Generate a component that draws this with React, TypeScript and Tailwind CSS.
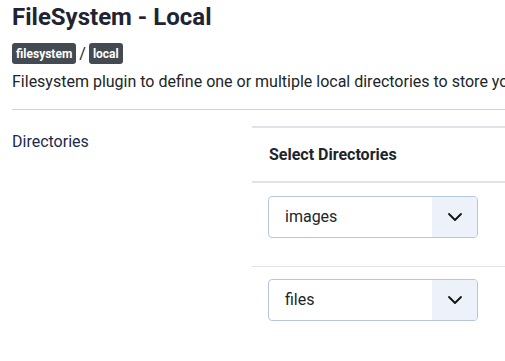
import React from "react";

function Chevron() {
  return (
    <svg width="16" height="16" viewBox="0 0 16 16" fill="none">
      <path d="M2 5l6 6 6-6" stroke="#111" strokeWidth="1.8" strokeLinecap="round" strokeLinejoin="round" />
    </svg>
  );
}

function SelectBox({ value }: { value: string }) {
  return (
    <div className="flex h-[42px] w-[210px] rounded-[4px] border border-[#b7c6de] overflow-hidden bg-white">
      <div className="flex-1 flex items-center pl-[16px] text-[16px] text-[#212529]">{value}</div>
      <div className="w-[45px] bg-[#edf1f9] flex items-center justify-center">
        <Chevron />
      </div>
    </div>
  );
}

export default function App() {
  return (
    <div className="w-[505px] h-[361px] overflow-hidden bg-white pl-[12px]" style={{ fontFamily: "Roboto, 'Liberation Sans', sans-serif" }}>
      <h1 className="pt-[3px] text-[24px] leading-[29px] font-bold text-[#1f2433] whitespace-nowrap">FileSystem - Local</h1>
      <div className="mt-[11px] flex items-center h-[21px]">
        <span className="h-[21px] px-[4px] rounded-[3px] bg-[#444a52] text-white text-[12px] font-bold flex items-center">filesystem</span>
        <span className="mx-[3px] text-[16px] text-[#212529]">/</span>
        <span className="h-[21px] px-[4px] rounded-[3px] bg-[#444a52] text-white text-[12px] font-bold flex items-center">local</span>
      </div>
      <p className="mt-[7px] text-[16px] leading-[22px] text-[#212529] whitespace-nowrap">Filesystem plugin to define one or multiple local directories to store your files.</p>
      <div className="mt-[16px] h-px bg-[#cfd2d6]" />
      <div className="flex mt-[16px]">
        <div className="w-[240px] pt-[6px] text-[16px] leading-[20px] text-[#1c2a4d]">Directories</div>
        <div className="flex-1">
          <div className="border-t-2 border-b-2 border-[#dfe2e6] h-[57px] flex items-center pl-[17px] text-[16px] font-bold text-[#212529]">Select Directories</div>
          <div className="h-[83px] pt-[13px] pl-[16px]">
            <SelectBox value="images" />
          </div>
          <div className="border-t border-[#dfe2e6] pt-[12px] pl-[16px]">
            <SelectBox value="files" />
          </div>
        </div>
      </div>
    </div>
  );
}
